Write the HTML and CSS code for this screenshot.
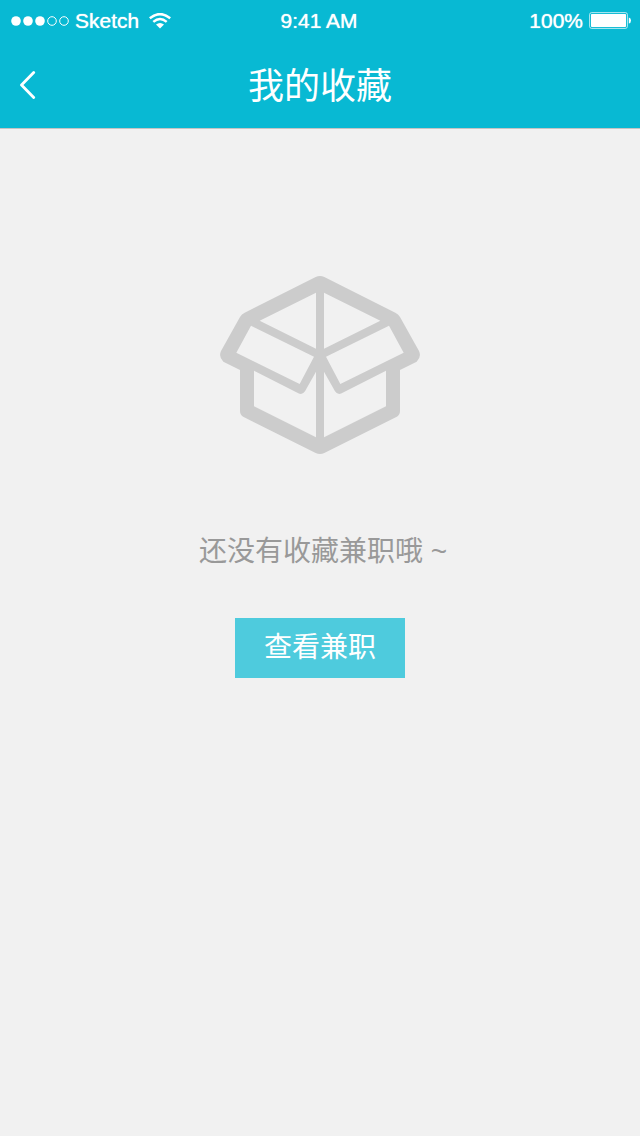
FILE: index.html
```html
<!DOCTYPE html>
<html lang="zh-CN">
<head>
<meta charset="utf-8">
<meta name="viewport" content="width=device-width, initial-scale=1">
<title>我的收藏</title>
<link rel="stylesheet" href="styles.css">
</head>
<body>
<header class="header">
  <div class="status">
    <div class="status-left">
      <svg class="signal" width="58" height="10" viewBox="0 0 58 10" aria-hidden="true">
        <g fill="#fff"><circle cx="5" cy="5" r="4.8"/><circle cx="17" cy="5" r="4.8"/><circle cx="29" cy="5" r="4.8"/></g>
        <g fill="none" stroke="#fff"><circle cx="41" cy="5" r="4.3"/><circle cx="53" cy="5" r="4.3"/></g>
      </svg>
      <span>Sketch</span>
      <svg class="wifi" width="22" height="16" viewBox="0 0 22 16" aria-hidden="true">
        <g fill="none" stroke="#fff" stroke-width="2.5"><path d="M.8 5.200Q11-3 21.200 5.200"/><path d="M4.300 8.900Q11 3.200 17.700 8.900"/></g>
        <path d="M7 11.500Q11 8.400 15 11.500L11 15.600Z" fill="#fff"/>
      </svg>
    </div>
    <span class="time">9:41 AM</span>
    <div class="status-right">
      <span>100%</span>
      <svg class="battery" width="42" height="17" viewBox="0 0 42 17" aria-hidden="true">
        <rect x=".6" y=".6" width="37.8" height="15.800" rx="2" fill="none" stroke="#fff" stroke-opacity=".7"/>
        <rect x="2" y="2" width="35" height="13" rx=".8" fill="#fff"/>
        <path d="M39.800 5.500Q42 6 42 8.500T39.800 11.500Z" fill="#fff"/>
      </svg>
    </div>
  </div>
  <nav class="navbar">
    <button class="back" type="button" aria-label="返回">
      <svg width="16" height="28" viewBox="0 0 16 28" aria-hidden="true"><path d="M13.700 1.500L1.500 14L13.700 26.500" fill="none" stroke="#fff" stroke-width="2.800" stroke-linecap="round" stroke-linejoin="round"/></svg>
    </button>
    <h1 class="title">我的收藏</h1>
  </nav>
</header>
<main class="empty">
  <svg class="box" width="200" height="178" viewBox="30 33 600 534" aria-hidden="true">
    <path fill="#ccc" fill-rule="evenodd" d="M317 36Q330 30 343 36L556 143Q565 147 570 156L627 258Q635 276 620 290L570 315V438Q570 450 559 456L343 564Q330 570 317 564L101 456Q90 450 90 438V315L40 290Q25 276 33 258L90 156Q95 147 104 143Z
      M318 83V251L149 167ZM342 83V251L511 167Z
      M123 182L312 275L269 357L79 263ZM537 182L348 275L391 357L581 263Z
      M132 317L265 385Q277 391 285 379L318 320V517L132 424Z
      M528 317L395 385Q383 391 375 379L342 320V517L528 424Z"/>
  </svg>
  <p class="message">还没有收藏兼职哦 ~</p>
  <button class="action" type="button">查看兼职</button>
</main>
</body>
</html>
```
FILE: styles.css
```css
* {
  box-sizing: border-box;
}

body {
  margin: 0;
  min-height: 100vh;
  background: #f1f1f1;
  font-family: "Liberation Sans", "Noto Sans CJK SC", sans-serif;
}

.header {
  background: #08b9d3;
  border-bottom: 1px solid #c4c4c4;
  color: #fff;
}

.status {
  display: grid;
  grid-template-columns: 1fr auto 1fr;
  align-items: center;
  height: 41px;
  padding: 0 9px 0 11px;
  font-size: 21px;
  line-height: 25px;
  text-shadow: 0 0 1px #fff;
}

.status-left,
.status-right {
  display: flex;
  align-items: center;
  gap: 6px;
}

.status-right {
  justify-content: flex-end;
}

.wifi {
  margin-left: 4px;
}

.time {
  padding-right: 4px;
}

.navbar {
  display: grid;
  grid-template-columns: 56px 1fr 56px;
  align-items: center;
  height: 87px;
}

.back {
  display: flex;
  align-items: center;
  height: 87px;
  padding: 0 20px;
  border: 0;
  background: none;
}

.title {
  margin: 0;
  padding-top: 4px;
  font-size: 36px;
  font-weight: 400;
  line-height: 83px;
  text-align: center;
}

.empty {
  display: flex;
  flex-direction: column;
  align-items: center;
  padding: 147px 20px 40px;
}

.message {
  margin: 78px 0 46px;
  padding-left: 6px;
  color: #999;
  font-size: 28px;
  line-height: 40px;
}

.action {
  padding: 0 29px;
  border: 0;
  background: #4ecbdd;
  color: #fff;
  font-family: inherit;
  font-size: 28px;
  line-height: 60px;
}
```
